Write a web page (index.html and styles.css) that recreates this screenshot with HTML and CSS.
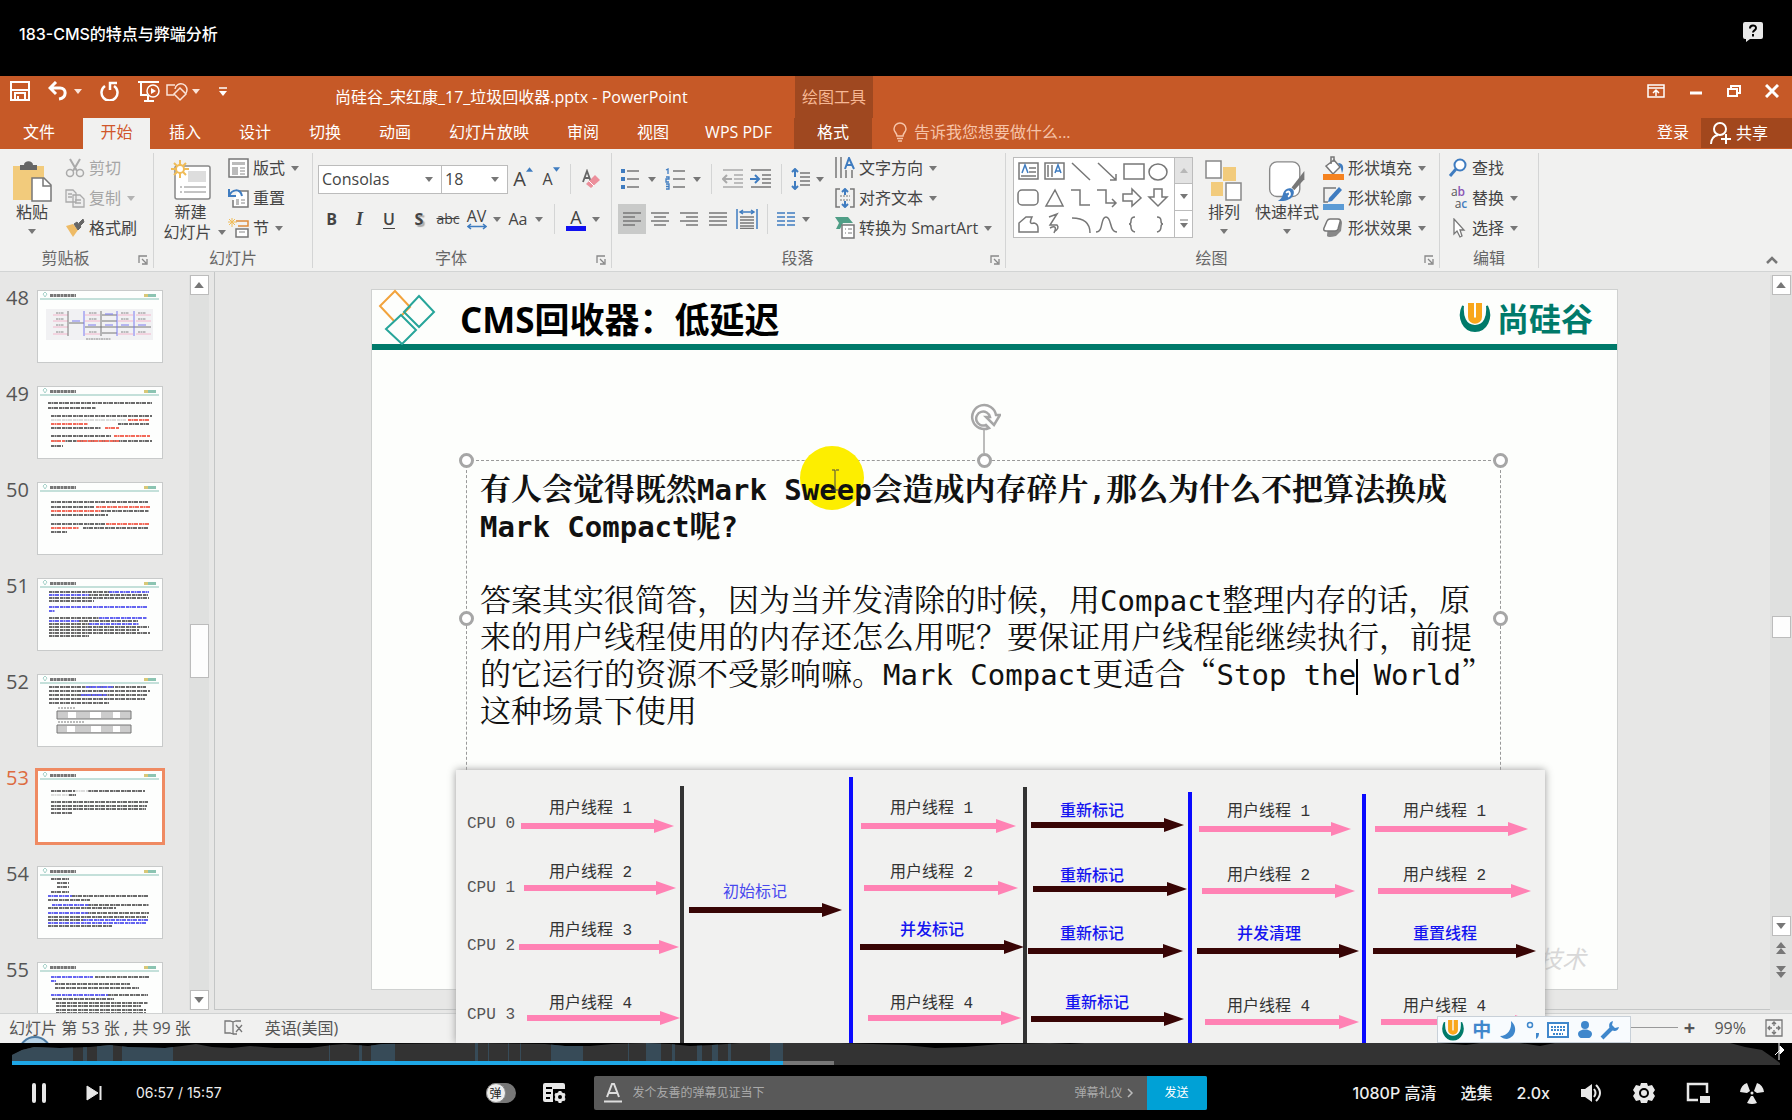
FILE: index.html
```html
<!DOCTYPE html>
<html lang="zh-CN">
<head>
<meta charset="utf-8">
<title>183-CMS的特点与弊端分析</title>
<link rel="stylesheet" href="styles.css">
</head>
<body>
<svg class="defs" aria-hidden="true">
  <symbol id="tri" viewBox="0 0 8 5"><path d="M0 0h8L4 5z" fill="#777"/></symbol>
  <symbol id="triup" viewBox="0 0 8 5"><path d="M0 5h8L4 0z" fill="#777"/></symbol>
  <symbol id="triw" viewBox="0 0 8 5"><path d="M0 0h8L4 5z" fill="#fbe3d8"/></symbol>
  <symbol id="launch" viewBox="0 0 10 10"><path d="M1 8V1h8M4 4l4 4M9 4v5H4" fill="none" stroke="#888" stroke-width="1.3"/></symbol>
  <symbol id="ulogo" viewBox="0 0 34 34"><path d="M5 6C-1 18 6 31 17 31S35 18 29 6c1 10-2 20-12 20S4 16 5 6z" fill="#007a6a" stroke="#007a6a" stroke-width="2"/><path d="M13 3v14c0 5 8 5 8 0V3" fill="none" stroke="#f9a61a" stroke-width="6"/></symbol>
  <symbol id="thead" viewBox="0 0 124 71"><path d="M5 3l2-2 2 2-2 3z" fill="none" stroke="#a9d3cb"/><path d="M12 4.500h26" stroke="#777" stroke-width="3" stroke-dasharray="3 .5"/><path d="M2 8h119" stroke="#c4e0da" stroke-width="2"/><path d="M106 4.500h4" stroke="#d8c878" stroke-width="3"/><path d="M110 4.500h8" stroke="#8cc4b2" stroke-width="3"/></symbol>
</svg>

<header class="video-head">
  <h1>183-CMS的特点与弊端分析</h1>
  <button class="plain" aria-label="反馈"><svg width="22" height="22" viewBox="0 0 22 22"><path d="M3 1h16a2 2 0 0 1 2 2v13a2 2 0 0 1-2 2H8l-4 3v-3H3a2 2 0 0 1-2-2V3a2 2 0 0 1 2-2z" fill="#e8e8e8"/><path d="M8 7.500c0-4 6-4 6-.5 0 2.500-3 2.200-3 4.500M11 13v2.500" fill="none" stroke="#000" stroke-width="2"/></svg></button>
</header>

<main class="ppt">
  <div class="titlebar">
    <div class="quick">
      <button class="plain" aria-label="保存"><svg width="20" height="20" viewBox="0 0 20 20"><path d="M1 1h18v18H1zM5 19v-7h10v7M8 15v4" fill="none" stroke="#fff" stroke-width="2"/><path d="M2 9h16" stroke="#fff" stroke-width="2"/></svg></button>
      <button class="plain" aria-label="撤消"><svg width="20" height="20" viewBox="0 0 20 20"><path d="M8 1L2 7l6 6M2 7h10c7 0 7 10-1 11" fill="none" stroke="#fff" stroke-width="3"/></svg></button>
      <svg width="8" height="5"><use href="#triw"/></svg>
      <button class="plain" aria-label="重复"><svg width="20" height="20" viewBox="0 0 20 20"><path d="M5 5a8 8 0 1 0 9 0M10 9V2h7" fill="none" stroke="#fff" stroke-width="2.500"/></svg></button>
      <button class="plain" aria-label="放映"><svg width="22" height="22" viewBox="0 0 22 22"><path d="M0 2h21M3 2v13h6M6 21h10M10 15v6" fill="none" stroke="#fff" stroke-width="2"/><circle cx="15" cy="11" r="6" fill="none" stroke="#fff" stroke-width="1.500"/><path d="M13 8l5 3-5 3z" fill="#fff"/></svg></button>
      <button class="plain" aria-label="形状"><svg width="22" height="22" viewBox="0 0 22 22"><path d="M8 15H1V5h8M9 9a6 6 0 1 1 11 4" fill="none" stroke="#fbe3d8" stroke-width="1.500"/><path d="M14 8l6 6-6 6-6-6z" fill="none" stroke="#fbe3d8" stroke-width="1.500"/></svg></button>
      <svg width="8" height="5"><use href="#triw"/></svg>
      <svg width="8" height="9" viewBox="0 0 8 9"><path d="M0 1h8" stroke="#fff" stroke-width="1.500"/><path d="M0 4h8L4 9z" fill="#fff"/></svg>
    </div>
    <p class="doc-title">尚硅谷_宋红康_17_垃圾回收器.pptx - PowerPoint</p>
    <p class="context">绘图工具</p>
    <div class="winbtns">
      <button class="plain" aria-label="功能区显示选项"><svg width="18" height="14" viewBox="0 0 18 14"><path d="M1 1h16v12H1zM1 4h16M9 12V6M6 9l3-3 3 3" fill="none" stroke="#fff" stroke-width="1.500"/></svg></button>
      <button class="plain" aria-label="最小化"><svg width="14" height="14" viewBox="0 0 14 14"><path d="M1 9h12" stroke="#fff" stroke-width="3"/></svg></button>
      <button class="plain" aria-label="还原"><svg width="14" height="14" viewBox="0 0 14 14"><path d="M1 5h9v7H1zM4 5V2h9v7h-3" fill="none" stroke="#fff" stroke-width="2"/></svg></button>
      <button class="plain" aria-label="关闭"><svg width="14" height="14" viewBox="0 0 14 14"><path d="M1 1l12 12M13 1L1 13" stroke="#fff" stroke-width="3"/></svg></button>
    </div>
  </div>

  <nav class="tabs">
    <button class="tab file">文件</button><button class="tab on">开始</button><button class="tab">插入</button><button class="tab">设计</button><button class="tab">切换</button><button class="tab">动画</button><button class="tab">幻灯片放映</button><button class="tab">审阅</button><button class="tab">视图</button><button class="tab wps">WPS PDF</button><button class="tab format">格式</button>
    <button class="tell"><svg width="14" height="20" viewBox="0 0 14 20"><path d="M4 14c0-3-3-4-3-7a6 6 0 0 1 12 0c0 3-3 4-3 7zM4 16.500h6M5 19h4" fill="none" stroke="#f6c3a8" stroke-width="1.500"/></svg>告诉我您想要做什么...</button>
    <button class="login">登录</button>
    <button class="share"><svg width="22" height="24" viewBox="0 0 22 24"><circle cx="10" cy="8" r="6" fill="none" stroke="#fff" stroke-width="2"/><path d="M1 23c0-5 3-8 7-9M11 18h10M16 13v10" fill="none" stroke="#fff" stroke-width="2"/></svg>共享</button>
  </nav>

  <div class="ribbon">
    <section class="group clip">
      <div class="gbody">
        <button class="big"><svg width="40" height="42" viewBox="0 0 40 42"><path d="M1 6h31v34H1z" fill="#f2cb7c"/><path d="M8 10V5h4c0-5 9-5 9 0h4v5z" fill="#666"/><path d="M20 18h12l7 7v16H20z" fill="#fff" stroke="#777" stroke-width="1.500"/><path d="M31 18v8h8" fill="none" stroke="#777" stroke-width="1.500"/></svg><span>粘贴</span><svg width="8" height="5"><use href="#tri"/></svg></button>
        <div class="stack">
          <button class="mini off"><svg width="20" height="20" viewBox="0 0 20 20"><path d="M5 1l7 12M15 1L8 13" stroke="#aaa" stroke-width="2" fill="none"/><circle cx="5" cy="15" r="3.500" fill="none" stroke="#aaa" stroke-width="1.500"/><circle cx="15" cy="15" r="3.500" fill="none" stroke="#aaa" stroke-width="1.500"/></svg>剪切</button>
          <button class="mini off"><svg width="20" height="20" viewBox="0 0 20 20"><path d="M1 2h7l3 3v9H1zM8 7h7l4 4v8H8zM3 6h4M3 9h4M10 12h6M10 15h6" fill="#eee" stroke="#aaa" stroke-width="1.300"/></svg>复制<svg class="gapl" width="8" height="5" opacity=".5"><use href="#tri"/></svg></button>
          <button class="mini"><svg width="20" height="20" viewBox="0 0 20 20"><path d="M1 8l7-2 5 6-5 7z" fill="#eebb66"/><path d="M9 6l3-2 4 5-3 3zM14 5l4-4 1 3-4 4z" fill="#666" stroke="#666"/></svg>格式刷</button>
        </div>
      </div>
      <footer><span>剪贴板</span><svg class="ln" width="10" height="10"><use href="#launch"/></svg></footer>
    </section>

    <section class="group slides">
      <div class="gbody">
        <button class="big"><svg width="42" height="42" viewBox="0 0 42 42"><rect x="5" y="6" width="35" height="33" rx="2" fill="#fff" stroke="#888" stroke-width="1.500"/><path d="M18 11h18v11H18z" fill="#ddd"/><path d="M10 27h2M14 27h22M10 32h2M14 32h22" stroke="#888"/><path d="M10 0v18M1 9h18M4 3l12 12M16 3L4 15" stroke="#f0bc58" stroke-width="2"/><circle cx="10" cy="9" r="4" fill="#fff" stroke="#f0bc58" stroke-width="2"/></svg><span>新建</span><span class="below">幻灯片 <svg width="8" height="5"><use href="#tri"/></svg></span></button>
        <div class="stack">
          <button class="mini"><svg width="21" height="20" viewBox="0 0 21 20"><path d="M1 1h19v18H1z" fill="#fff" stroke="#777" stroke-width="1.500"/><path d="M4 4h13v3H4zM4 9h6v8H4z" fill="#bbb"/><path d="M12 10h5M12 13h5M12 16h5" stroke="#888"/></svg>版式<svg width="8" height="5"><use href="#tri"/></svg></button>
          <button class="mini"><svg width="21" height="20" viewBox="0 0 21 20"><path d="M10 3h10v16H5v-7" fill="#fff" stroke="#777" stroke-width="1.500"/><path d="M8 11h3v6H8z" fill="#bbb"/><path d="M13 12h4M13 15h4" stroke="#888"/><path d="M1 1v7h7M1 8c3-7 11-8 13 0" fill="none" stroke="#3f7cc0" stroke-width="2"/></svg>重置</button>
          <button class="mini"><svg width="21" height="20" viewBox="0 0 21 20"><path d="M8 3h12v5H10" fill="none" stroke="#dd8a3a" stroke-width="1.500"/><path d="M8 11h12v8H8z" fill="#fff" stroke="#777" stroke-width="1.500"/><path d="M11 14h6" stroke="#888"/><path d="M4 0v9M0 4h9M1 1l6 6M7 1L1 7" stroke="#f0bc58"/></svg>节<svg width="8" height="5"><use href="#tri"/></svg></button>
        </div>
      </div>
      <footer><span>幻灯片</span></footer>
    </section>

    <section class="group font">
      <div class="gbody col">
        <div class="frow1">
          <label class="combo"><select aria-label="字体"><option>Consolas</option></select><svg width="8" height="5"><use href="#tri"/></svg></label>
          <label class="combo"><select aria-label="字号"><option>18</option></select><svg width="8" height="5"><use href="#tri"/></svg></label>
          <button class="t big-a">A<svg width="7" height="5" viewBox="0 0 8 5"><path d="M0 5h8L4 0z" fill="#3f7cc0"/></svg></button>
          <button class="t small-a">A<svg width="7" height="5" viewBox="0 0 8 5"><path d="M0 0h8L4 5z" fill="#3f7cc0"/></svg></button>
          <i class="sep"></i>
          <button class="t" aria-label="清除格式"><svg width="20" height="20" viewBox="0 0 20 20"><path d="M2 13L6 2l4 11M3 9h6" fill="none" stroke="#666" stroke-width="1.800"/><path d="M5 15l9-9 5 5-9 8z" fill="#ec8f9b"/><path d="M8 12l5 5" stroke="#fff"/></svg></button>
        </div>
        <div class="frow2">
          <button class="t"><b>B</b></button><button class="t ital">I</button><button class="t und">U</button><button class="t shad">S</button><button class="t strike">abc</button>
          <button class="t av">AV<svg width="20" height="7" viewBox="0 0 20 7"><path d="M1 3.500h18M4 1L1 3.500 4 6M16 1l3 2.500L16 6" fill="none" stroke="#3f7cc0" stroke-width="1.500"/></svg></button><svg width="8" height="5"><use href="#tri"/></svg>
          <button class="t">Aa</button><svg width="8" height="5"><use href="#tri"/></svg><i class="sep"></i>
          <button class="t fcol">A</button><svg width="8" height="5"><use href="#tri"/></svg>
        </div>
      </div>
      <footer><span>字体</span><svg class="ln" width="10" height="10"><use href="#launch"/></svg></footer>
    </section>

    <section class="group para">
      <div class="gbody">
        <div class="col">
          <div class="prow1">
            <svg width="18" height="20" viewBox="0 0 18 20"><path d="M6 2h12M6 10h12M6 18h12" stroke="#777" stroke-width="1.500"/><path d="M0 0h4v4H0zM0 8h4v4H0zM0 16h4v4H0z" fill="#3f7cc0"/></svg><svg width="8" height="5"><use href="#tri"/></svg>
            <svg width="20" height="22" viewBox="0 0 20 22"><path d="M8 3h12M8 11h12M8 19h12" stroke="#777" stroke-width="1.500"/><path d="M1 2l2-1v5M1 9h3v2H1v3h3M1 16h3v5H1M1 18.500h3" fill="none" stroke="#3f7cc0" stroke-width="1.300"/></svg><svg width="8" height="5"><use href="#tri"/></svg><i class="sep"></i>
            <svg width="22" height="20" viewBox="0 0 22 20"><path d="M1 1h20M12 6h9M12 10h9M12 14h9M1 18h20" stroke="#aaa" stroke-width="1.500"/><path d="M10 10H2M5 6l-4 4 4 4" fill="none" stroke="#aaa" stroke-width="2"/></svg>
            <svg width="22" height="20" viewBox="0 0 22 20"><path d="M1 1h20M12 6h9M12 10h9M12 14h9M1 18h20" stroke="#777" stroke-width="1.500"/><path d="M0 10h8M5 6l4 4-4 4" fill="none" stroke="#3f7cc0" stroke-width="2"/></svg><i class="sep"></i>
            <svg width="20" height="22" viewBox="0 0 20 22"><path d="M9 5h10M9 9h10M9 13h10M9 17h10" stroke="#777" stroke-width="1.500"/><path d="M4 1v8M1 4l3-3 3 3M4 13v8M1 18l3 3 3-3" fill="none" stroke="#3f7cc0" stroke-width="2"/></svg><svg width="8" height="5"><use href="#tri"/></svg>
          </div>
          <div class="prow2">
            <button class="t act" aria-label="左对齐"><svg width="20" height="15" viewBox="0 0 20 15"><path d="M1 1h18M1 5h12M1 9h18M1 13h12" stroke="#777" stroke-width="1.500"/></svg></button>
            <button class="t" aria-label="居中"><svg width="20" height="15" viewBox="0 0 20 15"><path d="M1 1h18M4 5h12M1 9h18M4 13h12" stroke="#777" stroke-width="1.500"/></svg></button>
            <button class="t" aria-label="右对齐"><svg width="20" height="15" viewBox="0 0 20 15"><path d="M1 1h18M7 5h12M1 9h18M7 13h12" stroke="#777" stroke-width="1.500"/></svg></button>
            <button class="t" aria-label="两端对齐"><svg width="20" height="15" viewBox="0 0 20 15"><path d="M1 1h18M1 5h18M1 9h18M1 13h18" stroke="#777" stroke-width="1.500"/></svg></button>
            <button class="t" aria-label="分散对齐"><svg width="22" height="20" viewBox="0 0 22 20"><path d="M1 0v20M21 0v20M4 3h14M7 1L4 3l3 2M15 1l3 2-3 2" fill="none" stroke="#3f7cc0" stroke-width="1.500"/><path d="M4 8h14M4 11h14M4 14h14M4 17h14M4 19.500h14" stroke="#777" stroke-width="1.500"/></svg></button><i class="sep"></i>
            <svg width="18" height="15" viewBox="0 0 18 15"><path d="M0 1h8M10 1h8M0 5h8M10 5h8M0 9h8M10 9h8M0 13h8M10 13h8" stroke="#3f7cc0" stroke-width="1.500"/></svg><svg width="8" height="5"><use href="#tri"/></svg>
          </div>
        </div>
        <div class="stack">
          <button class="mini"><svg width="20" height="22" viewBox="0 0 20 22"><path d="M1 0v21M6 0v21M11 13v8M17 13v8" stroke="#777" stroke-width="1.500"/><path d="M10 12l4-11 5 11M11 8h6" fill="none" stroke="#3f7cc0" stroke-width="2"/></svg>文字方向<svg width="8" height="5"><use href="#tri"/></svg></button>
          <button class="mini"><svg width="20" height="20" viewBox="0 0 20 20"><path d="M5 1H1v18h4M15 1h4v18h-4" fill="none" stroke="#777" stroke-width="1.500"/><path d="M5 8h10M5 12h10" stroke="#777" stroke-dasharray="2 1"/><path d="M10 7V1M7 4l3-3 3 3M10 13v6M7 16l3 3 3-3" fill="none" stroke="#3f7cc0" stroke-width="2"/></svg>对齐文本<svg width="8" height="5"><use href="#tri"/></svg></button>
          <button class="mini"><svg width="20" height="22" viewBox="0 0 20 22"><path d="M0 0h13l5 6H8l-3 6H1l3-6z" fill="#4f9e86"/><path d="M7 8h12v13H7z" fill="#fff" stroke="#777" stroke-width="1.500"/><path d="M10 12h1M13 12h4M10 16h1M13 16h4" stroke="#777"/></svg>转换为 SmartArt<svg width="8" height="5"><use href="#tri"/></svg></button>
        </div>
      </div>
      <footer><span>段落</span><svg class="ln" width="10" height="10"><use href="#launch"/></svg></footer>
    </section>

    <section class="group draw">
      <div class="gbody">
        <div class="gallery">
          <svg class="shapes" width="160" height="80" viewBox="1013 158 160 80" fill="none" stroke="#777" stroke-width="1.500">
            <path d="M1018 163h19v16h-19zM1028 168h7M1028 172h7M1020 176h15"/><path d="M1021 173l3-8 3 8" stroke="#3f7cc0"/>
            <path d="M1044 163h19v16h-19zM1047 165v12M1051 165v12"/><path d="M1054 173l3-8 3 8M1055 171h4" stroke="#3f7cc0"/>
            <path d="M1071 163l18 17M1097 163l18 17M1115 174v6h-6M1123 164h20v15h-20z"/><ellipse cx="1157" cy="172" rx="9" ry="8"/>
            <rect x="1017" y="190" width="20" height="15" rx="4"/><path d="M1054 190l8 16h-17zM1070 190h9v15h10M1096 190h9v13h9M1111 199l4 4-4 4M1122 194h9v-5l9 9-9 8v-5h-9zM1153 189h8v8h5l-9 9-9-9h5z"/>
            <path d="M1018 232v-9l7-6h6q-4 8 2 6 4 1 4 5v4zM1048 217l8-3-7 11h7q3 3-3 7M1049 228q8-4 4 5M1071 218q18 0 18 15M1095 232c8 0 4-15 10-15s3 15 11 15M1134 217q-4 0-4 4 0 3-2 3 2 0 2 3 0 4 4 5M1156 217q4 0 4 4 0 3 2 3-2 0-2 3 0 4-4 5"/>
          </svg>
          <div class="gscroll"><button class="dim" aria-label="上"><svg width="8" height="5" opacity=".4"><use href="#triup"/></svg></button><button aria-label="下"><svg width="8" height="5"><use href="#tri"/></svg></button><button aria-label="更多"><svg width="8" height="9" viewBox="0 0 8 9"><path d="M0 1h8" stroke="#777"/><path d="M0 4h8L4 9z" fill="#777"/></svg></button></div>
        </div>
        <button class="big arr"><svg width="38" height="42" viewBox="0 0 38 42"><path d="M18 7h13v14H18zM6 22h12v14H6z" fill="#f2cb7c"/><path d="M1 1h15v17H1zM21 23h15v17H21z" fill="#fff" stroke="#888" stroke-width="1.500"/></svg><span>排列</span><svg width="8" height="5"><use href="#tri"/></svg></button>
        <button class="big"><svg width="40" height="46" viewBox="0 0 40 46"><rect x="1" y="2" width="33" height="38" rx="8" fill="#fff" stroke="#888" stroke-width="1.500"/><path d="M39 12v9L28 33l-3-3z" fill="#777"/><path d="M24 31c4 1 5 6 1 10-4 4-10 4-15 4 5-3 5-6 6-9 2-4 4-5 8-5z" fill="#3f7cc0"/><path d="M19 36q3-3 4 0t-2 4" stroke="#fff" stroke-width="2" fill="none"/></svg><span>快速样式</span><svg width="8" height="5"><use href="#tri"/></svg></button>
        <div class="stack">
          <button class="mini"><svg width="21" height="24" viewBox="0 0 21 24"><path d="M3 10l8-6 6 7-7 7z" fill="#fff" stroke="#777" stroke-width="1.500"/><path d="M8 8V1h3v5" fill="none" stroke="#777" stroke-width="1.500"/><path d="M15 7c6 0 6 6 4 10-1-4-1-6-4-10z" fill="#3f7cc0"/><path d="M0 18h21v6H0z" fill="#f5821f"/></svg>形状填充<svg width="8" height="5"><use href="#tri"/></svg></button>
          <button class="mini"><svg width="21" height="24" viewBox="0 0 21 24"><path d="M13 2H1v14h4" fill="none" stroke="#777" stroke-width="1.500"/><path d="M16 1l3 3L9 15l-4 1 1-4z" fill="#3f7cc0"/><path d="M0 18h21v6H0z" fill="#5b9bd5"/></svg>形状轮廓<svg width="8" height="5"><use href="#tri"/></svg></button>
          <button class="mini"><svg width="21" height="20" viewBox="0 0 21 20"><path d="M5 5l10-4q4 0 4 4l-1 8-5 5q-8 2-9 0z" fill="#888"/><path d="M7 1h8q3 0 2 3l-2 7q-1 2-3 2H3q-3 0-2-3l3-7q1-2 3-2z" fill="#fff" stroke="#777" stroke-width="1.500"/></svg>形状效果<svg width="8" height="5"><use href="#tri"/></svg></button>
        </div>
      </div>
      <footer><span>绘图</span><svg class="ln" width="10" height="10"><use href="#launch"/></svg></footer>
    </section>

    <section class="group edit">
      <div class="gbody">
        <div class="stack">
          <button class="mini"><svg width="20" height="20" viewBox="0 0 20 20"><circle cx="12" cy="7" r="5.500" fill="#fff" stroke="#3f7cc0" stroke-width="2"/><path d="M8 11l-6 7" stroke="#3f7cc0" stroke-width="3"/></svg>查找</button>
          <button class="mini"><span class="abac"><span>a<b class="pur">b</b></span><span class="blu2">a<b class="blu">c</b></span></span>替换<svg class="gapl" width="8" height="5"><use href="#tri"/></svg></button>
          <button class="mini"><svg width="20" height="20" viewBox="0 0 20 20"><path d="M6 1v15l3-3 3 6 2-1-2-6h4z" fill="#fff" stroke="#777" stroke-width="1.300"/></svg>选择<svg width="8" height="5"><use href="#tri"/></svg></button>
        </div>
      </div>
      <footer><span>编辑</span></footer>
    </section>
    <button class="plain fold" aria-label="折叠功能区"><svg width="12" height="8" viewBox="0 0 12 8"><path d="M1 7l5-5 5 5" fill="none" stroke="#777" stroke-width="2.500"/></svg></button>
  </div>

  <div class="work">
    <ol class="thumbs">
      <li><span>48</span><svg width="124" height="71" viewBox="0 0 124 71"><use href="#thead"/><path d="M8 18h107v31H8z" fill="#f1f1f3"/><path d="M15 24h15M15 30h15M15 36h15M15 43h15M47 24h15M47 30h15M47 43h15M80 24h15M80 30h15M80 43h15M98 24h15M98 30h15M98 43h15" stroke="#f3b6cc"/><path d="M18 22h8M18 28h8M18 34h8M18 41h8M51 22h8M51 28h8M51 41h8M83 22h8M83 28h8M83 41h8M100 22h8M100 28h8M100 41h8M48 48h25" stroke="#888" stroke-dasharray="2 .5"/><path d="M31 32h15M47 36h66M64 24h15M64 30h15M64 42h15M30 20v25M63 20v25" stroke="#777"/><path d="M46 20v25M79 20v25M96 20v25M34 30h8M50 34h8M67 23h8M67 34h8M83 34h8M100 34h8" stroke="#7a7af0"/></svg></li>
      <li><span>49</span><svg width="124" height="71" viewBox="0 0 124 71"><use href="#thead"/><path class="k" d="M10 16h104M10 21h48M13 29h101M80 37h31M13 41h50M13 49h60M13 54h101M13 59h12"/><path class="r" d="M90 33h21M13 37h37M67 41h14M76 49h36M13 54h14M39 54h42"/><path class="g" d="M13 33h75"/></svg></li>
      <li><span>50</span><svg width="124" height="71" viewBox="0 0 124 71"><use href="#thead"/><path class="k" d="M13 19h97M13 24h44M63 28h48M13 32h57M13 41h54M45 45h65M13 49h16"/><path class="r" d="M58 24h54M13 28h50M68 41h43M13 45h28"/></svg></li>
      <li><span>51</span><svg width="124" height="71" viewBox="0 0 124 71"><use href="#thead"/><path class="k" d="M11 13h60M50 16h60M11 19h100M11 22h45M11 39h50M40 42h60M11 45h40M11 48h100M11 51h90M11 54h101M11 57h40"/><path class="b" d="M71 13h40M11 16h40M11 28h98M11 32h6M61 39h48M11 42h30M51 45h50"/></svg></li>
      <li><span>52</span><svg width="124" height="71" viewBox="0 0 124 71"><use href="#thead"/><path class="k" d="M11 12h97M11 16h101M11 20h99M11 24h96M11 28h60"/><path class="b" d="M48 12h27M43 20h26"/><path d="M19 36h74v8H19zM19 50h74v8H19z" fill="#ccc" stroke="#777"/><path d="M30 37h8v6h-8zM52 37h11v6H52zM75 37h7v6h-7zM29 51h8v6h-8zM53 51h10v6H53zM75 51h7v6h-7z" fill="#fff"/><path d="M20 33h18M20 47h26" stroke="#777" stroke-dasharray="2 1"/></svg></li>
      <li class="sel"><span>53</span><svg width="124" height="71" viewBox="0 0 124 71"><use href="#thead"/><path class="k" d="M13 20h24M50 20h57M31 24h7M13 31h97M13 35h96M13 38h95M13 42h21"/><path class="g" d="M13 24h18M37 20h14"/></svg></li>
      <li><span>54</span><svg width="124" height="71" viewBox="0 0 124 71"><use href="#thead"/><path class="k" d="M13 12h18M19 16h12M19 20h12M13 25h18M34 29h76M10 33h42M50 38h61M10 41h68M48 46h63M10 50h100M10 53h35M10 59h64"/><path class="b" d="M10 29h24M14 38h37M10 46h40M45 53h65M10 56h98"/></svg></li>
      <li><span>55</span><svg width="124" height="71" viewBox="0 0 124 71"><use href="#thead"/><path class="k" d="M57 14h54M17 21h75M17 25h84M70 32h40M14 36h62M18 40h92M18 43h85M18 47h90M18 50h90"/><path class="b" d="M13 14h42M13 18h5M13 32h57"/></svg></li>
    </ol>
    <div class="vbar left"><button aria-label="上一页"><svg width="10" height="6"><use href="#triup"/></svg></button><i class="knob"></i><button aria-label="下一页"><svg width="10" height="6"><use href="#tri"/></svg></button></div>
    <div class="stage">
      <article class="slide">
        <header>
          <svg width="58" height="56" viewBox="0 0 58 56" fill="none" stroke-width="2"><path d="M17 2l15 16-15 15L2 17z" stroke="#f2a33c"/><path d="M41 7l15 16-15 15-15-15z" stroke="#27a59a"/><path d="M23 26l15 15-14 14L8 40z" stroke="#27a59a" fill="#fdfefc"/></svg>
          <h2>CMS回收器<span class="colon">：</span>低延迟</h2>
          <div class="brand"><svg width="34" height="34"><use href="#ulogo"/></svg><span>尚硅谷</span></div>
        </header>
        <div class="box">
          <i class="spot"></i>
          <p class="q">有人会觉得既然<code>Mark Sweep</code>会造成内存碎片<code>,</code>那么为什么不把算法换成<br><code>Mark Compact</code>呢<code>?</code></p>
          <p>答案其实很简答，因为当并发清除的时候，用<code>Compact</code>整理内存的话，原<br>来的用户线程使用的内存还怎么用呢？要保证用户线程能继续执行，前提<br>的它运行的资源不受影响嘛。<code>Mark Compact</code>更适合“<code>Stop the<i class="caret"></i> World</code>”<br>这种场景下使用</p>
          <i class="h tl"></i><i class="h tc"></i><i class="h tr"></i><i class="h ml"></i><i class="h mr"></i>
          <svg class="rot" width="34" height="50" viewBox="0 0 34 50" fill="none" stroke="#a6a6a6"><path d="M17 27v23" stroke-width="1.500"/><path d="M22 25A12 12 0 1 1 29 12h4l-6 10-8-8h4a7 7 0 1 0-4 8z" stroke-width="2.500" fill="#fff"/></svg>
          <svg class="ibeam" width="9" height="22" viewBox="0 0 9 22"><path d="M1 1h3v20M8 1H5M1 21h7" fill="none" stroke="#444"/></svg>
        </div>
        <span class="mark">技术</span>
        <svg class="diagram" viewBox="455 770 1089 273">
          <defs>
            <marker id="hp" markerUnits="userSpaceOnUse" markerWidth="20" markerHeight="14" refX="0" refY="7" viewBox="0 0 20 14"><path d="M0 0l20 7-20 7z" fill="#ff82b4"/></marker>
            <marker id="hd" markerUnits="userSpaceOnUse" markerWidth="20" markerHeight="14" refX="0" refY="7" viewBox="0 0 20 14"><path d="M0 0l20 7-20 7z" fill="#380505"/></marker>
          </defs>
          <path d="M681 786v257M1024 787v256" stroke="#333" stroke-width="4"/>
          <path d="M850 777v266M1189 792v251M1363 794v249" stroke="#0a0aff" stroke-width="4"/>
          <g class="pink">
            <path d="M520 826h133"/><path d="M523 888h132"/><path d="M518 947h140"/><path d="M526 1018h133"/>
            <path d="M860 826h135"/><path d="M863 888h134"/><path d="M867 1018h133"/>
            <path d="M1198 829h132"/><path d="M1201 891h133"/><path d="M1204 1022h134"/>
            <path d="M1374 829h133"/><path d="M1377 891h133"/><path d="M1380 1022h134"/>
          </g>
          <g class="dark">
            <path d="M688 910h133"/><path d="M859 947h144"/>
            <path d="M1030 825h133"/><path d="M1032 889h134"/><path d="M1027 951h135"/><path d="M1030 1019h133"/>
            <path d="M1196 951h142"/><path d="M1372 951h143"/>
          </g>
          <g class="cpu"><text x="466" y="828">CPU 0</text><text x="466" y="892">CPU 1</text><text x="466" y="950">CPU 2</text><text x="466" y="1019">CPU 3</text></g>
          <g class="ut">
            <text x="548" y="813">用户线程 1</text><text x="548" y="877">用户线程 2</text><text x="548" y="935">用户线程 3</text><text x="548" y="1008">用户线程 4</text>
            <text x="889" y="813">用户线程 1</text><text x="889" y="877">用户线程 2</text><text x="889" y="1008">用户线程 4</text>
            <text x="1226" y="816">用户线程 1</text><text x="1226" y="880">用户线程 2</text><text x="1226" y="1011">用户线程 4</text>
            <text x="1402" y="816">用户线程 1</text><text x="1402" y="880">用户线程 2</text><text x="1402" y="1011">用户线程 4</text>
          </g>
          <g class="bt">
            <text x="722" y="897" class="soft">初始标记</text><text x="899" y="935">并发标记</text>
            <text x="1059" y="816">重新标记</text><text x="1059" y="881">重新标记</text><text x="1059" y="939">重新标记</text><text x="1064" y="1008">重新标记</text>
            <text x="1236" y="939">并发清理</text><text x="1412" y="939">重置线程</text>
          </g>
        </svg>
      </article>
    </div>
    <div class="vbar right"><button aria-label="向上"><svg width="10" height="6"><use href="#triup"/></svg></button><i class="knob"></i><button aria-label="向下"><svg width="10" height="6"><use href="#tri"/></svg></button>
      <svg class="dbl" width="10" height="12" viewBox="0 0 10 12"><path d="M0 6h10L5 0zM0 12h10L5 6z" fill="#777"/></svg><svg class="dbl" width="10" height="12" viewBox="0 0 10 12"><path d="M0 0h10L5 6zM0 6h10l-5 6z" fill="#777"/></svg></div>
  </div>

  <div class="status">
    <span>幻灯片 第 53 张 , 共 99 张</span>
    <svg width="20" height="16" viewBox="0 0 20 16"><path d="M9 14l-3-1H1V1h5l3 1zM9 2l3-1h5M9 14h4M12 5l6 7M18 5l-6 7" fill="none" stroke="#777" stroke-width="1.300"/></svg>
    <span>英语(美国)</span>
    <div class="zoom"><i></i><b>+</b><span>99%</span><svg width="18" height="18" viewBox="0 0 18 18"><path d="M1 1h16v16H1zM9 3v4M9 11v4M3 9h4M11 9h4M7 5l2-2 2 2M7 13l2 2 2-2M5 7L3 9l2 2M13 7l2 2-2 2" fill="none" stroke="#777" stroke-width="1.300"/></svg></div>
  </div>
  <i class="orb"></i>
  <div class="ime">
    <svg width="24" height="24"><use href="#ulogo"/></svg><span>中</span>
    <svg width="20" height="20" viewBox="0 0 20 20"><path d="M12 1c7 6 5 16-4 18-3 0-5-1-7-3 8 0 12-7 11-15z" fill="#3f87cc"/></svg>
    <svg width="14" height="20" viewBox="0 0 14 20"><circle cx="4" cy="5" r="2.500" fill="none" stroke="#3f87cc" stroke-width="1.500"/><path d="M10 13h3c0 3-1 5-3 6z" fill="#3f87cc"/></svg>
    <svg width="22" height="16" viewBox="0 0 22 16"><rect x="1" y="1" width="20" height="14" fill="#fff" stroke="#3f87cc" stroke-width="2"/><path d="M4 5h14M4 8h14M6 12h10" stroke="#3f87cc" stroke-width="2" stroke-dasharray="2 1"/></svg>
    <svg width="16" height="18" viewBox="0 0 16 18"><circle cx="8" cy="4" r="4" fill="#3f87cc"/><path d="M1 13c0-6 14-6 14 0 0 2-2 4-3 4H4c-1 0-3-2-3-4z" fill="#3f87cc"/></svg>
    <svg width="20" height="20" viewBox="0 0 20 20"><path d="M2 18l9-9" stroke="#3f87cc" stroke-width="4"/><path d="M13 1a5 5 0 1 0 6 6l-4 1-3-3z" fill="#3f87cc"/></svg>
  </div>
</main>

<footer class="player">
  <div class="seek">
    <svg viewBox="12 0 1768 22" preserveAspectRatio="none">
      <defs><clipPath id="wave"><path d="M12 22V12L22 7L34 4L60 5L90 4L110 2L128 4L165 5L182 3L196 1L212 4L232 5L250 3L275 5L310 5L332 2L345 1L368 3L382 1L470 0L545 1L565 3L590 3L612 1L645 0L670 1L690 3L712 2L740 0L840 0L905 2L935 5L965 4L1000 1L1050 0L1070 1L1085 0L1440 0L1466 2L1480 0L1520 0L1540 3L1555 0L1730 0L1745 4L1762 7L1772 14L1780 20V22z"/></clipPath></defs>
      <g clip-path="url(#wave)"><path d="M12 0h1768v22H12z" fill="#333"/><path d="M12 0h61v22H12zM83 0h4v22h-4zM97 0h16v22H97zM122 0h51v22h-51zM329 0h1v22h-1zM359 0h3v22h-3zM371 0h24v22h-24zM475 0h3v22h-3zM488 0h1v22h-1zM508 0h1v22h-1zM520 0h1v22h-1zM551 0h32v22h-32zM628 0h1v22h-1zM646 0h15v22h-15zM672 0h3v22h-3zM697 0h5v22h-5zM712 0h6v22h-6zM728 0h3v22h-3zM770 0h13v22h-13z" fill="#374b58"/></g>
      <path d="M783 18h51v4h-51z" fill="#777"/><path d="M12 18h771v4H12z" fill="#1ea7e6"/>
    </svg>
    <svg class="star" width="12" height="18" viewBox="0 0 12 18"><path d="M5 0v17M1 12l5-5M6 3l4 4-4 4z" fill="#fff" stroke="#fff"/></svg>
  </div>
  <div class="controls">
    <button class="plain" aria-label="暂停"><svg width="16" height="20" viewBox="0 0 16 20"><path d="M3 2v16M13 2v16" stroke="#e8e8e8" stroke-width="4" stroke-linecap="round"/></svg></button>
    <button class="plain next" aria-label="下一个"><svg width="16" height="16" viewBox="0 0 16 16"><path d="M1 1l11 7-11 7z" fill="#e8e8e8" stroke="#e8e8e8"/><path d="M14.500 1v14" stroke="#e8e8e8" stroke-width="2"/></svg></button>
    <time>06:57 / 15:57</time>
    <div class="mid">
      <label class="toggle"><input type="checkbox" aria-label="弹幕开关"><span>弹</span></label>
      <button class="plain" aria-label="弹幕设置"><svg width="26" height="22" viewBox="0 0 26 22"><path d="M3 1h18a2 2 0 0 1 2 2v4H11v13H3a2 2 0 0 1-2-2V3a2 2 0 0 1 2-2z" fill="#e8e8e8"/><path d="M4 6h6M4 11h5M4 16h4" stroke="#000" stroke-width="2"/><circle cx="18" cy="15" r="3.500" fill="#000" stroke="#e8e8e8" stroke-width="3"/><path d="M18 9v2M18 19v2M13 12l2 1M21 17l2 1M13 18l2-1M21 13l2-1" stroke="#e8e8e8" stroke-width="3"/></svg></button>
      <form class="send">
        <svg width="18" height="20" viewBox="0 0 18 20"><path d="M3 14L8 1h2l5 13M5 10h8M0 18.500h18" fill="none" stroke="#ddd" stroke-width="2"/></svg>
        <input type="text" aria-label="弹幕" placeholder="发个友善的弹幕见证当下">
        <a href="#">弹幕礼仪<svg width="7" height="10" viewBox="0 0 7 10"><path d="M1 1l4 4-4 4" fill="none" stroke="#bbb" stroke-width="1.500"/></svg></a>
        <button type="button">发送</button>
      </form>
    </div>
    <div class="right-ctl">
      <button class="plain">1080P 高清</button><button class="plain">选集</button><button class="plain">2.0x</button>
      <button class="plain ic" aria-label="音量"><svg width="22" height="20" viewBox="0 0 22 20"><path d="M1 6h4l7-5v18l-7-5H1z" fill="#e8e8e8"/><path d="M14 6q3 4 0 8M16 2q8 8 0 16" fill="none" stroke="#e8e8e8" stroke-width="2"/></svg></button>
      <button class="plain ic" aria-label="设置"><svg width="24" height="22" viewBox="0 0 24 22"><path d="M9 1h6l1 3 4-1 3 5-2 3 2 3-3 5-4-1-1 3H9l-1-3-4 1-3-5 2-3-2-3 3-5 4 1z" fill="#e8e8e8"/><circle cx="12" cy="11" r="4" fill="#e8e8e8" stroke="#000" stroke-width="2"/></svg></button>
      <button class="plain ic" aria-label="画中画"><svg width="24" height="22" viewBox="0 0 24 22"><path d="M12 18H2V2h19v9" fill="none" stroke="#e8e8e8" stroke-width="2.500"/><path d="M14 14h10v7H14z" fill="#e8e8e8"/></svg></button>
      <button class="plain ic" aria-label="全屏"><svg width="24" height="22" viewBox="0 0 24 22"><path d="M10 9L7 1Q1 3 0 10l7 1zM14 9l3-8q6 2 7 9l-7 1zM11 14h2l4 7q-5 2-10 0z" fill="#e8e8e8"/><circle cx="12" cy="11" r="1.500" fill="#e8e8e8"/></svg></button>
    </div>
  </div>
</footer>
</body>
</html>
```
FILE: styles.css
```css
* { box-sizing: border-box; }
body {
  margin: 0;
  height: 100vh;
  display: flex;
  flex-direction: column;
  overflow: hidden;
  background: #000;
  font: 16px/20px "Open Sans", "Noto Sans CJK SC", sans-serif;
  color: #444;
}
h1, h2, p, ol { margin: 0; padding: 0; }
button, input, select { font: inherit; color: inherit; border: 0; padding: 0; background: none; }
i, em { font-style: normal; }
svg { display: block; flex: none; }
.defs { position: absolute; width: 0; height: 0; }
.plain { display: flex; align-items: center; }

.video-head {
  height: 76px;
  padding: 0 28px 12px 19px;
  display: flex;
  align-items: center;
  justify-content: space-between;
}
.video-head h1 { font: 500 16px/24px Inter, "Noto Sans CJK SC", sans-serif; color: #fff; padding-top: 4px; }

.ppt { flex: 1; min-height: 0; position: relative; display: flex; flex-direction: column; overflow: hidden; background: #e7e7e6; }

/* title bar and tabs */
.titlebar { height: 42px; background: #c65927; display: flex; color: #fff; }
.quick { width: 335px; padding-left: 10px; height: 30px; display: grid; grid-template-columns: 36px 24px 16px 48px 30px 26px 12px 42px; align-items: center; justify-items: center; }
.quick > :first-child { justify-self: start; }
.doc-title { width: 460px; line-height: 42px; white-space: nowrap; }
.context { width: 78px; text-align: center; line-height: 42px; background: #9f4820; color: #f6b794; }
.winbtns { margin-left: auto; height: 30px; padding-right: 13px; display: flex; align-items: center; gap: 24px; }
.tabs { height: 31px; background: #c65927; display: flex; align-items: stretch; color: #fff; }
.tabs > button { padding-bottom: 3px; }
.tabs > .tab { padding: 0 19px 3px; white-space: nowrap; }
.tabs > .file { width: 83px; padding: 0 29px 3px 23px; }
.tabs > .on { width: 67px; padding: 0 0 3px; background: #f1f1f0; color: #d0562a; }
.tabs > .wps { padding: 0 22px 3px 17px; }
.tabs > .format { width: 78px; padding: 0 0 3px; background: #9f4820; }
.tell { display: flex; align-items: center; gap: 7px; margin-left: 21px; color: #f6c3a8; white-space: nowrap; }
.login { margin-left: auto; width: 56px; }
.share { width: 91px; margin-bottom: 1px; background: #a2471d; display: flex; align-items: center; gap: 4px; padding-left: 9px; }
.tabs > .share { padding-bottom: 0; }

/* ribbon */
.ribbon { height: 123px; background: #f1f1f0; border-bottom: 1px solid #d2d4d4; display: flex; padding: 4px 0 3px; }
.group { border-right: 1px solid #d4d5d5; display: flex; flex-direction: column; flex: none; }
.clip { width: 154px; }
.slides { width: 159px; }
.font { width: 299px; }
.para { width: 394px; }
.draw { width: 434px; }
.edit { width: 99px; }
.gbody { height: 95px; display: flex; align-items: flex-start; }
.group footer { height: 20px; position: relative; text-align: center; line-height: 20px; color: #666; padding-right: 22px; }
.slides footer { padding: 0; }
.edit footer { padding: 0; }
.ln { position: absolute; right: 5px; bottom: 3px; }
.big { display: flex; flex-direction: column; align-items: center; padding-top: 7px; white-space: nowrap; }
.big > svg:first-child { height: 42px; }
.big > span { height: 20px; }
.big > svg:last-child { margin-top: 7px; }
.big .below { display: flex; align-items: center; gap: 6px; padding-left: 8px; }
.clip .big { width: 64px; }
.slides .big { width: 73px; }
.stack { display: flex; flex-direction: column; padding-left: 1px; }
.mini { height: 30px; display: flex; align-items: center; gap: 4px; white-space: nowrap; line-height: 20px; }
.mini > svg:last-child:not(:first-child) { margin-left: 2px; }
.mini > .gapl:last-child { margin-left: 10px; }
.off { color: #a5a5a5; }
.col { display: flex; flex-direction: column; }
.sep { width: 1px; height: 30px; background: #d4d5d5; }
.t { display: flex; align-items: center; justify-content: center; }
.frow1 { display: grid; grid-template-columns: 124px 66px 30px 26px 12px 30px; margin: 11px 0 0 5px; height: 29px; align-items: center; justify-items: center; }
.combo { display: grid; width: 100%; height: 29px; background: #fff; border: 1px solid #bcbcbc; align-items: center; }
.combo + .combo { border-left: 0; }
.combo > * { grid-area: 1 / 1; }
.combo select { width: 100%; height: 27px; padding-left: 3px; appearance: none; }
.combo svg { justify-self: end; margin-right: 8px; }
.big-a, .small-a { align-items: flex-start; font-size: 20px; line-height: 24px; }
.small-a { font-size: 16px; }
.frow2 { display: grid; grid-template-columns: 27px 29px 30px 30px 28px 29px 12px 30px 12px 18px 26px 14px; margin: 11px 0 0 5px; height: 30px; align-items: center; justify-items: center; }
.ital { font-style: italic; font-family: "Liberation Serif", serif; font-weight: bold; font-size: 18px; }
.und { text-decoration: underline; text-underline-offset: 3px; font-weight: 600; }
.shad { font-weight: bold; text-shadow: 2px 2px 1px #aaa; }
.strike { text-decoration: line-through; font-size: 14px; }
.av { flex-direction: column; line-height: 14px; }
.fcol { line-height: 18px; font-size: 18px; border-bottom: 5px solid #1010f0; width: 20px; }
.prow1 { display: grid; grid-template-columns: 30px 14px 32px 12px 16px 27px 29px 12px 27px 12px; margin: 11px 0 0 3px; height: 28px; align-items: center; justify-items: center; }
.prow2 { display: grid; grid-template-columns: 29px 28px 30px 27px 31px 10px 28px 12px; margin: 12px 0 0 5px; height: 30px; align-items: center; justify-items: start; }
.prow2 > * { justify-self: center; }
.act { width: 28px; height: 30px; background: #c9cac9; }
.para .col { width: 223px; }
.para .stack { padding-left: 0; }

.gallery { display: flex; width: 180px; height: 81px; margin: 4px 0 0 7px; background: #fff; border: 1px solid #bcbcbc; }
.gscroll { flex: 1; display: grid; grid-template-rows: 1fr 1fr 1fr; border-left: 1px solid #bcbcbc; }
.gscroll button { display: flex; align-items: center; justify-content: center; border-bottom: 1px solid #bcbcbc; }
.gscroll button:last-child { border: 0; }
.gscroll .dim { background: #e3e3e3; }
.draw .big { width: 64px; }
.draw .arr { width: 62px; }
.draw .stack { padding-left: 4px; }
.edit .stack { padding-left: 8px; }
.abac { width: 20px; font-size: 12px; line-height: 12px; display: flex; flex-direction: column; color: #555; }
.abac b { font-weight: 600; }
.blu2 { padding-left: 6px; }
.pur { color: #8a55b5; }
.blu { color: #3f7cc0; }
.fold { margin: auto 14px 3px auto; height: 10px; }

/* workspace */
.work { flex: 1; min-height: 0; display: flex; }
.thumbs { width: 189px; list-style: none; padding-top: 16px; overflow: hidden; display: flex; flex-direction: column; gap: 19px; }
.thumbs li { height: 77px; flex: none; display: flex; align-items: flex-start; padding: 3px 0 0 6px; font-size: 20px; line-height: 14px; color: #555; }
.thumbs span { width: 28px; }
.thumbs svg { margin-left: 4px; background: #fdfefd; outline: 1px solid #c8caca; }
.thumbs .sel { color: #dd6b40; }
.thumbs .sel svg { outline: 3px solid #ef8a62; }
.k, .r, .b, .g { fill: none; stroke-width: 2; stroke-dasharray: 3 .5 2 .5 4 1; stroke: #6a6a6a; }
.r { stroke: #f26a5a; }
.b { stroke: #6464f0; }
.g { stroke: #bbb; stroke-width: 1; }
.vbar { width: 20px; background: #dfe0df; display: flex; flex-direction: column; align-items: center; margin: 3px 0; flex: none; }
.vbar button { width: 19px; height: 20px; background: #fff; border: 1px solid #bcbcbc; display: flex; align-items: center; justify-content: center; }
.knob { width: 19px; background: #fdfdfd; border: 1px solid #bcbcbc; }
.left .knob { height: 54px; margin: 329px 0 auto; }
.right { width: 22px; }
.right .knob { height: 22px; margin: 321px 0 auto; }
.right .dbl { margin: 6px 0; }
.dbl + .dbl { margin-bottom: 32px; }
.stage { flex: 1; min-width: 0; margin-left: 5px; border-left: 1px solid #c4c6c6; border-bottom: 1px solid #c4c6c6; padding: 17px 152px 19px 156px; margin-bottom: 3px; display: flex; }

/* slide */
.slide { position: relative; flex: 1; background: #fdfefc; border: 1px solid #cfd1d0; color: #111; }
.slide > header { height: 60px; border-bottom: 6px solid #007a6a; display: flex; align-items: center; padding: 0 24px 0 6px; }
.slide h2 { font: bold 35px/40px "Open Sans", "Noto Sans CJK SC", sans-serif; margin-left: 24px; padding-top: 4px; color: #000; white-space: nowrap; }
.colon { font-family: "Noto Sans CJK TC", sans-serif; }
.brand { margin-left: auto; display: flex; align-items: center; gap: 5px; font: bold 32px/36px "Noto Sans CJK SC", sans-serif; color: #007a6a; }
.box {
  position: relative;
  margin: 110px 116px 0 94px;
  height: 330px;
  padding: 7px 0 0 13px;
  border: 1px dashed #999;
  font: 31px/37px "Noto Serif CJK SC", "SimSun", "Noto Sans CJK SC", sans-serif;
  white-space: nowrap;
}
.box p { position: relative; margin-bottom: 37px; }
.box code { font: 29px/10px "DejaVu Sans Mono", monospace; }
.box .q, .box .q code { font-weight: bold; }
.caret { display: inline-block; width: 2px; height: 36px; margin: -12px -2px -12px 0; background: #000; vertical-align: middle; }
.h { position: absolute; width: 15px; height: 15px; border: 3px solid #a6a6a6; border-radius: 50%; background: #fff; }
.tl { left: -8px; top: -8px; }
.tc { left: calc(50% - 7px); top: -8px; }
.tr { right: -8px; top: -8px; }
.ml { left: -8px; top: 150px; }
.mr { right: -8px; top: 150px; }
.rot { position: absolute; left: calc(50% - 17px); top: -58px; }
.spot { position: absolute; left: 333px; top: -15px; width: 64px; height: 64px; border-radius: 50%; background: #fdee00; }
.ibeam { position: absolute; left: 364px; top: 8px; }
.mark { position: absolute; right: 31px; bottom: 16px; font: italic 24px/30px "Noto Sans CJK SC", sans-serif; color: #d8d8d8; }
.diagram { position: absolute; left: 84px; right: 72px; top: 480px; background: #f1f1f0; box-shadow: 0 0 8px #999; z-index: 2; }
.pink path { stroke: #ff82b4; stroke-width: 6; marker-end: url(#hp); }
.dark path { stroke: #380505; stroke-width: 6; marker-end: url(#hd); }
.diagram text { font: 16px "Liberation Mono", "Noto Sans CJK SC", monospace; white-space: pre; fill: #333; }
.diagram .cpu text { fill: #555; }
.diagram .bt text { fill: #1414f0; font-weight: 500; }
.diagram .bt .soft { fill: #4848ee; font-weight: 400; }

.status { height: 30px; background: #f1f1f0; border-top: 1px solid #d0d2d2; display: flex; align-items: center; padding: 0 9px 2px; white-space: nowrap; color: #555; }
.status > svg { margin: 0 21px 0 33px; }
.zoom { margin-left: auto; display: flex; align-items: center; }
.zoom i { width: 50px; height: 1px; background: #999; }
.zoom b { width: 22px; text-align: center; font-size: 20px; }
.zoom span { margin: 0 19px 0 14px; }
.orb { position: absolute; left: 18px; bottom: -27px; width: 34px; height: 34px; border-radius: 50%; background: #b9d3e6; border: 2px solid #4c7ba3; }
.ime { position: absolute; z-index: 3; right: 161px; bottom: 0; width: 194px; height: 27px; background: #f8fbfe; border: 1px solid #c8d0d8; display: flex; align-items: center; justify-content: space-between; padding: 0 10px 0 3px; color: #3f87cc; font-weight: bold; font-size: 19px; }

/* player */
.player { height: 77px; flex: none; font-family: Inter, "Noto Sans CJK SC", sans-serif; color: #eee; }
.seek { height: 22px; padding: 0 12px; position: relative; }
.seek > svg:first-child { width: 100%; height: 22px; }
.seek .star { position: absolute; right: 6px; top: 0; }
.controls { height: 55px; display: flex; align-items: center; padding: 0 28px 0 31px; }
.next { margin: 0 34px 0 39px; }
time { font-size: 14px; }
.mid { flex: 1; margin: 0 146px 0 264px; display: flex; align-items: center; }
.toggle { width: 30px; height: 20px; border-radius: 10px; background: #777; margin-right: 26px; display: flex; position: relative; }
.toggle input { position: absolute; opacity: 0; margin: 0; }
.toggle span { width: 20px; height: 20px; border-radius: 50%; background: #eee; color: #222; font-size: 12px; text-align: center; line-height: 19px; border: 1px solid #888; }
.send { flex: 1; height: 34px; margin-left: 26px; background: #595959; border-radius: 2px; display: flex; align-items: center; font-size: 12px; padding-left: 10px; }
.send input { flex: 1; min-width: 0; padding-left: 11px; height: 34px; outline: 0; }
.send input::placeholder { color: #aaa; }
.send a { display: flex; align-items: center; gap: 4px; color: #aaa; text-decoration: none; margin-right: 13px; }
.send button { width: 60px; height: 34px; background: #00a1d6; color: #fff; border-radius: 0 2px 2px 0; }
.right-ctl { display: flex; align-items: center; font-size: 16px; font-weight: 500; gap: 24px; }
.right-ctl .ic { margin-left: 6px; }
.right-ctl button { white-space: nowrap; }
```
